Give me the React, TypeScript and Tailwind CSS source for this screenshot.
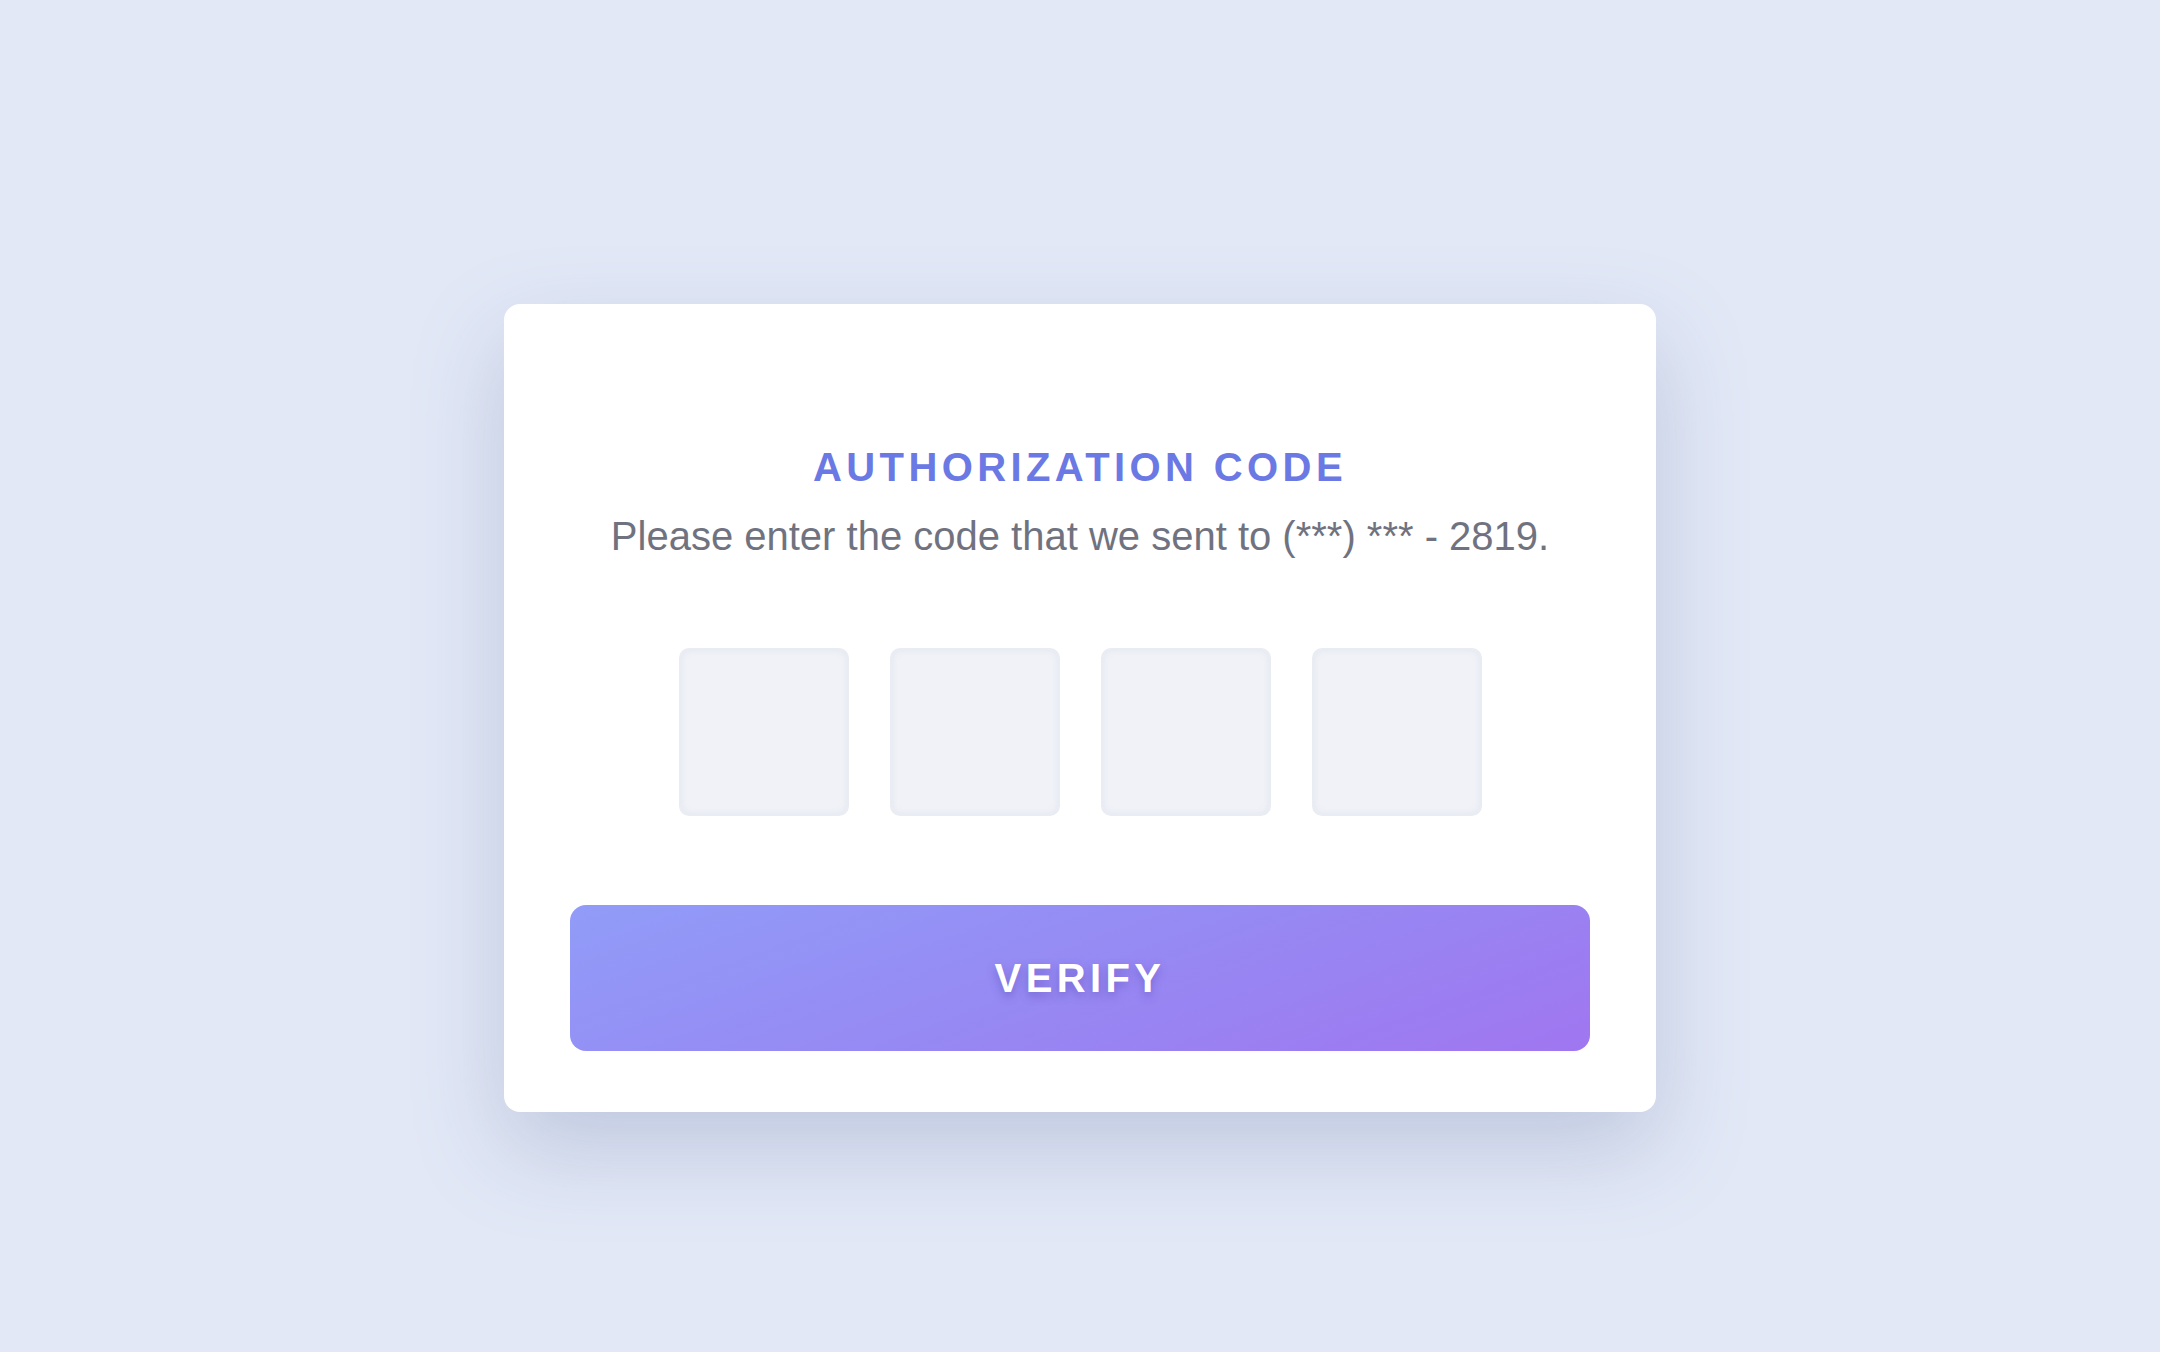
export default function App() {
  const boxes = [0, 1, 2, 3];

  return (
    <main className="min-h-screen bg-[#e2e8f6] pt-[304px] font-['Liberation_Sans',Arial,sans-serif]">
      <div className="mx-auto w-[1152px] rounded-[16px] bg-white px-[66px] pt-[139px] pb-[61px] shadow-[0_36px_90px_rgba(110,125,170,0.3)]">
        {/* heading */}
        <h1 className="text-center text-[40px] font-bold leading-[48px] tracking-[0.11em] text-[#6b79e4]">
          AUTHORIZATION CODE
        </h1>
        <p className="mt-[21px] text-center text-[40px] leading-[48px] text-[#70737f]">
          Please enter the code that we sent to (***) *** - 2819.
        </p>

        {/* code inputs */}
        <div className="mt-[88px] flex justify-center gap-[41px]">
          {boxes.map((b) => (
            <input
              key={b}
              maxLength={1}
              className="h-[168px] w-[170px] rounded-[10px] border-2 border-[#eaecf3] bg-[#f0f2f7] text-center text-[64px] text-[#4b4f5c] outline-none shadow-[inset_0_0_6px_rgba(200,205,225,0.35)]"
            />
          ))}
        </div>

        <button className="mt-[89px] flex h-[146px] w-full items-center justify-center rounded-[16px] bg-[linear-gradient(160deg,#919cf8_0%,#9689f3_50%,#a076f0_100%)] text-[40px] font-bold tracking-[0.11em] text-white [text-shadow:0_4px_10px_rgba(80,60,170,0.45)]">
          VERIFY
        </button>
      </div>
    </main>
  );
}
